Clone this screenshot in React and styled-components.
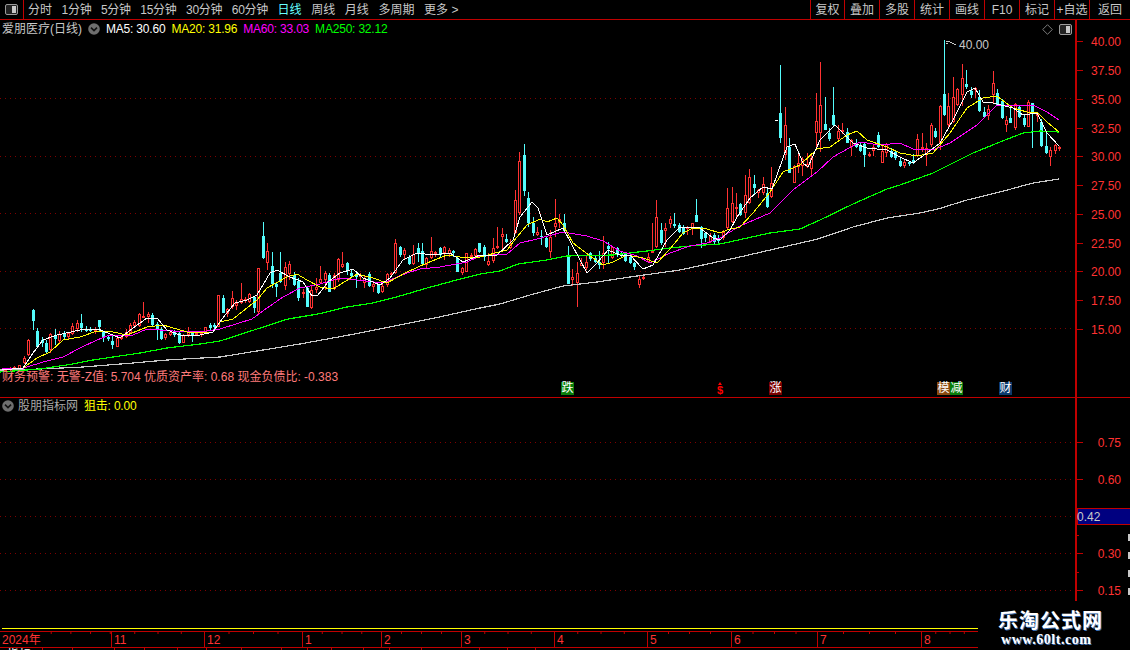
import React from "react";
import styled, { createGlobalStyle } from "styled-components";

const RED = "#c00000";
const AXIS = "#ff3232";
const GREY = "#c8c8c8";
const CN = '"Liberation Sans", "Noto Sans CJK SC", sans-serif';

const Global = createGlobalStyle`
  html, body { margin: 0; padding: 0; background: #000; overflow: hidden; }
  #root { width: 1130px; height: 650px; overflow: hidden; }
`;

const Screen = styled.div`
  width: 1130px; height: 650px; background: #000; overflow: hidden;
  display: flex; flex-direction: column;
  font: 12px/14px ${CN}; color: ${GREY};
`;
const Toolbar = styled.div`
  height: 19px; flex: none; display: flex; align-items: stretch;
  border-bottom: 1px solid ${RED};
`;
const LayoutCell = styled.div`
  width: 23px; flex: none; box-sizing: content-box;
  display: flex; align-items: center; justify-content: center;
  border-right: 1px solid ${RED};
`;
const Tabs = styled.div`display: flex; align-items: center; gap: 9.6px; padding-left: 4px; flex: 1;`;
const Tab = styled.span`
  white-space: nowrap;
  color: ${p => (p.$active ? "#66ffff" : GREY)};
  letter-spacing: ${p => (p.$num ? "-0.3px" : "0")};
`;
const ToolButton = styled.div`
  width: ${p => p.$w || 35}px; box-sizing: border-box; flex: none;
  border-left: 1px solid ${RED};
  display: flex; align-items: center; justify-content: center; white-space: nowrap;
`;
const Pane = styled.div`
  height: ${p => p.$h}px; flex: none; display: flex; position: relative;
  border-bottom: ${p => (p.$line ? `1px solid ${RED}` : "none")};
`;
const Plot = styled.div`width: 1075px; flex: none; position: relative;`;
const ChartSvg = styled.svg`display: block; position: absolute; left: 0; top: 0;`;
const Axis = styled.div`
  flex: 1; position: relative; border-left: 2px solid ${RED};
`;
const Legend = styled.div`
  position: absolute; left: 2px; top: ${p => p.$top}px; display: flex; align-items: center; gap: 6px; white-space: nowrap;
`;
const Name = styled.span`color: ${p => p.$c || GREY}; margin-left: ${p => p.$shift || 0}px;`;
const Value = styled.span`color: ${p => p.$c}; letter-spacing: -0.2px;`;
const Fin = styled.div`
  position: absolute; left: 2px; top: 350px; color: #ff7a7a; white-space: pre;
`;
const Marker = styled.span`
  position: absolute; top: 362px; width: 13px; height: 13px;
  background: ${p => p.$bg}; color: #fff; font-size: 12px; line-height: 13px; text-align: center;
`;
const Dollar = styled.span`
  position: absolute; top: 364px; left: 716px; width: 8px; color: #ff0000;
  font: bold 11px/12px "Liberation Sans", sans-serif; text-align: center;
  &::before {
    content: ""; position: absolute; left: 2px; top: -2px;
    border-left: 2px solid transparent; border-right: 2px solid transparent; border-bottom: 3px solid #ff0000;
  }
`;
const CornerIcons = styled.div`
  position: absolute; right: 3px; top: 4px; display: flex; align-items: center; gap: 6px;
`;
const Bottom = styled.div`flex: 1; display: flex; min-height: 0;`;
const TimeColumn = styled.div`width: 978px; flex: none; display: flex; flex-direction: column;`;
const YellowLine = styled.div`
  margin: 27px 0 2px 2px; height: 1px; flex: none; background: #ffff00;
`;
const Months = styled.div`
  height: 15px; flex: none; display: flex;
  border-top: 1px solid ${RED}; border-bottom: 1px solid ${RED};
`;
const Month = styled.div`
  width: ${p => p.$w}px; flex: none; box-sizing: border-box; position: relative;
  border-left: ${p => (p.$first ? "none" : `1px solid ${RED}`)};
  padding-left: 2px; color: ${AXIS}; line-height: 17px; white-space: nowrap;
  &::after {
    content: ""; position: absolute; top: 0; right: 0; left: ${p => p.$from || 0}px; height: 2px;
    background: linear-gradient(to left, ${RED} 1px, transparent 1px) 0 0 / ${p => p.$tile}px 2px repeat-x;
  }
`;
const Tabs2 = styled.div`flex: 1; display: flex; overflow: hidden; min-height: 0;`;
const SheetTab = styled.div`
  width: ${p => p.$w}px; flex: none; box-sizing: border-box; border-right: 1px solid ${RED};
  color: #fff; padding-left: 7px; line-height: 15px; overflow: hidden; white-space: nowrap;
`;
const Logo = styled.div`
  flex: 1; display: flex; flex-direction: column; padding: 7px 0 0 20px; color: #fff;
  text-shadow: 1px 1px 0 #3d6fb0;
`;
const LogoName = styled.div`
  font: bold 20px/24px "Noto Sans CJK SC", sans-serif; letter-spacing: 1px; white-space: nowrap;
`;
const LogoUrl = styled.div`
  font: bold 14px/15px "Liberation Serif", serif; letter-spacing: 0.55px; padding-left: 3px; white-space: nowrap;
`;

const pts = s => s;
const MA5 = pts("2,370 23,368 33,353 43,340 57,335 80,330 98,329 120,338 133,328 147,318 157,318 167,330 180,335 200,335 213,332 222,319 235,303 247,300 257,295 270,273 277,270 290,277 303,282 312,296 318,295 328,282 340,273 353,269 363,278 380,285 390,278 403,260 417,253 433,255 450,253 463,262 480,255 497,255 513,240 520,217 532,202 538,208 547,235 563,228 587,273 597,263 608,250 620,255 630,255 643,269 653,265 667,240 680,227 700,228 713,238 720,240 730,230 737,217 750,198 763,187 772,189 787,147 795,144 803,163 808,167 820,140 835,125 853,143 867,148 887,150 900,157 913,163 927,153 940,143 953,120 967,92 975,88 983,102 993,103 1013,108 1023,115 1037,113 1047,133 1059,146");
const MA20 = pts("2,370 23,368 37,358 50,352 63,340 80,337 97,331 113,332 127,335 147,327 163,325 187,332 200,333 213,332 220,322 233,319 257,300 267,288 287,277 297,274 307,280 320,287 333,289 357,274 373,278 387,283 407,272 427,263 447,255 467,258 480,257 507,250 517,237 527,225 540,219 547,222 557,218 563,225 573,243 593,258 603,265 613,262 627,255 643,258 657,263 670,249 683,233 693,228 707,229 720,233 727,230 740,227 753,213 770,192 783,172 800,165 817,149 830,147 847,135 857,131 867,140 887,147 900,153 917,156 933,153 950,133 967,108 983,98 997,96 1013,108 1027,112 1037,112 1047,122 1059,132");
const MA60 = pts("2,368 20,369 27,367 43,362 63,357 80,348 97,340 107,336 133,335 147,329 173,331 200,332 220,329 252,319 267,308 283,297 300,288 320,284 340,278 357,280 383,283 397,277 407,273 420,269 440,267 467,262 480,256 507,254 520,243 537,239 563,232 587,236 603,241 620,251 637,256 650,263 670,253 690,246 707,243 720,238 740,226 770,213 793,190 817,172 833,157 860,142 880,145 900,143 913,149 933,150 950,143 977,125 997,105 1017,106 1033,105 1047,112 1059,120");
const MA120 = pts("0,372 40,369 53,367 73,364 93,360 113,357 140,353 167,348 200,344 220,341 288,319 318,314 347,307 373,303 400,296 427,288 453,281 480,274 500,271 518,264 547,260 567,256 613,255 647,251 670,248 690,246 720,244 743,239 770,233 800,229 820,220 853,204 887,189 900,185 933,173 973,153 1000,142 1023,133 1040,131 1059,132");
const MA250 = pts("0,370 40,369 83,367 133,363 167,360 220,357 300,344 360,333 430,319 480,308 500,304 530,295 563,286 597,282 630,277 680,270 740,257 818,239 853,227 887,218 920,213 938,209 967,200 1000,192 1033,183 1059,179");

const blocks = [
  [0, 290, [
    [57,225,225,237,240,0],[73,198,205,220,222,0],[85,148,150,195,198,0],[100,57,60,92,120,1],[112,115,123,172,174,1],[127,140,150,158,170,1],[139,150,158,187,192,1],[151,128,132,180,190,0],[166,118,138,148,165,1],[178,122,132,152,158,0],[193,122,130,142,150,1],[205,125,130,142,150,0],[217,100,107,132,135,0],[232,90,100,118,125,0],[244,72,98,115,125,1],[259,108,118,122,125,1],[271,112,118,122,125,1],[286,112,120,124,132,0],[298,90,90,112,122,1],[310,122,125,140,155,1],[325,135,140,148,152,1],[337,135,152,165,178,1],[352,142,145,170,172,0],[364,138,140,148,150,0],[379,118,125,140,145,0],[391,100,105,128,132,0],[403,90,95,108,112,0],[418,70,72,108,110,0],[430,37,78,80,80,0],[445,65,72,82,100,0],[457,70,75,105,108,1],[472,95,102,120,150,1],[484,110,117,148,150,1],[496,128,132,145,150,0],[511,122,125,135,138,0],[523,120,125,135,140,1],[538,125,130,160,162,1],[550,132,135,158,160,0],[565,112,125,135,140,0],[577,122,128,135,155,1],[589,128,130,135,138,0],[604,126,130,135,140,0],[616,110,112,125,130,0],[631,100,105,115,122,1],[643,100,105,110,120,1],
  ]],
  [200, 210, [
    [55,255,255,351,352,0],[70,255,265,308,310,1],[82,295,297,312,320,0],[97,243,265,290,298,0],[109,270,280,288,300,0],[124,220,268,280,282,0],[136,262,268,272,280,0],[148,250,252,275,278,0],[163,260,262,295,310,1],[175,175,175,305,315,0],[190,37,78,145,148,1],[202,100,123,158,180,0],[217,125,168,223,235,1],[229,215,222,232,262,1],[241,125,190,215,220,1],[256,155,170,228,240,0],[268,152,162,192,210,0],[283,185,195,225,228,1],[295,205,212,265,272,1],[310,238,245,250,265,0],[322,230,235,290,292,1],[334,225,240,295,298,0],[349,205,232,240,248,0],[361,168,207,218,220,0],[376,183,188,210,240,0],[388,188,195,245,247,1],[403,190,195,238,240,0],[415,145,147,210,215,0],[427,125,162,172,175,0],[442,155,158,180,195,1],[454,180,190,198,205,1],[469,190,192,200,235,1],[481,190,195,200,210,0],[493,198,205,220,235,0],[508,185,192,228,230,1],[520,215,222,232,245,0],[535,222,225,250,252,1],[547,222,228,245,248,0],[562,190,193,225,230,0],[574,185,190,194,200,0],[586,88,100,190,192,0],[601,108,112,135,140,1],[613,115,120,135,150,0],[628,135,140,162,165,1],[640,105,132,162,165,0],[655,100,115,132,155,1],[667,98,122,162,165,1],[679,140,145,165,175,0],[694,82,123,145,148,0],[706,122,125,130,140,0],[721,112,115,135,140,1],[733,108,112,130,150,0],[748,115,120,132,140,0],[760,120,123,130,140,1],[772,140,145,185,187,1],[787,170,175,190,195,0],[799,128,130,185,187,0],[814,130,135,142,150,0],[826,115,118,138,145,0],[838,98,100,125,130,1],
  ]],
  [480, 130, [
    [13,345,352,382,392,1],[25,370,393,405,408,0],[40,325,355,392,400,0],[52,292,348,355,358,0],[67,295,312,320,358,0],[79,312,327,337,340,1],[91,328,345,355,358,0],[106,180,210,310,312,0],[118,67,93,250,255,0],[133,42,75,182,198,1],[145,187,205,278,290,1],[160,262,278,310,318,1],[172,292,307,315,318,0],[184,300,318,322,345,1],[199,318,325,352,355,1],[211,300,320,365,385,0],[226,207,280,292,320,0],[238,252,268,280,295,0],[253,252,280,303,305,1],[265,348,375,462,462,1],[277,418,442,450,468,0],[292,395,428,458,530,0],[304,385,400,408,408,0],[319,375,397,415,420,0],[331,365,370,388,392,1],[346,378,385,395,400,1],[358,362,395,405,418,1],[370,318,368,400,418,0],[385,335,348,357,400,1],[397,350,352,385,388,0],[412,352,355,375,380,1],[424,365,370,374,380,1],[436,365,372,392,395,1],[451,375,382,400,402,1],[463,395,400,412,420,1],[478,435,448,465,475,0],[490,435,440,448,450,0],[505,370,380,395,400,0],[517,280,362,368,370,0],[529,210,262,352,355,0],[544,280,300,340,345,1],[556,280,295,302,350,0],[571,258,268,282,295,0],[583,250,282,288,295,1],[598,280,285,305,310,1],
  ]],
  [670, 170, [
    [40,165,172,192,195,1],[52,168,172,178,195,0],[67,158,160,175,195,0],[79,88,135,155,157,1],[94,168,172,208,235,1],[106,185,190,205,215,1],[121,190,198,215,220,0],[133,190,195,215,222,1],[145,195,205,212,218,1],
  ]],
  [720, 50, [
    [10,540,545,565,570,0],[22,415,475,535,540,0],[37,410,460,515,520,0],[49,430,470,475,505,0],[61,460,462,495,498,1],[76,375,435,490,505,0],[88,357,382,460,462,0],[103,375,402,415,432,1],[115,418,420,430,445,0],[130,380,403,430,435,0],[142,410,430,470,475,1],[154,352,400,440,445,0],[181,45,188,265,280,1],[196,170,225,315,330,0],[208,265,290,368,370,1],[223,345,347,398,400,0],[235,312,340,350,370,0],[247,320,328,348,378,0],[262,310,343,352,355,0],[274,310,325,358,375,0],[289,130,213,250,300,0],[301,35,165,250,305,0],[316,140,222,240,240,1],[328,235,250,268,272,1],[340,110,195,225,230,1],[355,225,243,267,270,0],[367,220,240,245,252,0],[382,235,245,278,280,1],[394,268,270,290,318,0],[409,268,280,290,295,1],[421,280,288,303,305,1],[433,280,282,315,350,1],[448,305,312,315,322,0],[460,285,290,302,318,0],[475,245,255,292,295,1],[487,285,303,338,340,0],[499,280,282,308,322,0],[514,295,303,322,325,1],[526,300,305,325,330,1],[541,320,332,347,350,1],
  ]],
  [900, 30, [
    [13,390,395,408,415,0],[28,392,395,403,408,1],[40,372,390,400,402,1],[52,312,328,378,380,0],[67,310,352,358,365,0],[79,340,355,375,408,0],[94,278,285,345,350,0],[106,295,303,322,325,1],[121,225,228,342,360,0],[133,30,192,255,258,1],[145,190,228,285,290,0],[160,140,202,275,280,0],[172,175,178,225,228,0],[187,102,145,195,228,0],[199,120,162,172,178,1],[214,170,183,195,205,1],[226,170,175,180,205,0],[238,180,200,243,245,1],[253,232,245,262,265,1],[265,225,238,258,270,0],[280,122,158,195,222,0],[292,178,188,225,228,1],[307,208,212,265,268,1],[319,258,270,285,305,0],[331,232,265,278,280,1],[346,220,222,295,300,0],[358,225,232,262,265,1],[373,255,265,285,290,1],[385,210,215,290,292,0],[397,218,218,252,355,1],[412,250,252,258,275,0],[424,268,275,348,350,1],[439,305,348,370,372,1],[451,350,360,380,408,0],[466,342,345,362,372,0],[478,347,350,356,362,0],
  ]],
];

const candles = [
  [5, 368, 369, 371, 372, 0], [10, 367, 368, 370, 372, 0], [14, 366, 367, 370, 372, 0],
  ...blocks.flatMap(([ox, oy, rows]) =>
    rows.map(([zx, hi, top, bot, lo, c]) => [
      Math.round(ox + zx / 3), Math.round(oy + hi / 3), Math.round(oy + top / 3),
      Math.round(oy + bot / 3), Math.round(oy + lo / 3), c,
    ])
  ),
];

const CandleRed = "#ff3232";
const CandleCyan = "#54fcfc";

const Candles = () => (
  <g shapeRendering="crispEdges">
    {candles.map(([x, hi, top, bot, lo, c], i) => (
      <g key={i}>
        <rect x={x} y={hi} width={1} height={Math.max(lo - hi, 1)} fill={c ? CandleCyan : CandleRed} />
        {c ? (
          <rect x={x - 1} y={top} width={3} height={Math.max(bot - top, 1)} fill={CandleCyan} />
        ) : (
          <rect x={x - 0.5} y={top + 0.5} width={2} height={Math.max(bot - top - 1, 1)} fill="#000" stroke={CandleRed} strokeWidth={1} />
        )}
      </g>
    ))}
  </g>
);

const Line = ({ d, c, w = 1 }) => <polyline points={d} fill="none" stroke={c} strokeWidth={w} shapeRendering="crispEdges" />;

const Dots = ({ ys }) => (
  <g>
    {ys.map(y => (
      <line key={y} x1={0} x2={1075} y1={y + 0.5} y2={y + 0.5} stroke="#800000" strokeDasharray="1 4" />
    ))}
  </g>
);

const upperTicks = [
  ["40.00", 41], ["37.50", 70], ["35.00", 99], ["32.50", 128], ["30.00", 156],
  ["27.50", 185], ["25.00", 214], ["22.50", 243], ["20.00", 271], ["17.50", 300], ["15.00", 329],
];
const lowerTicks = [["0.75", 441], ["0.60", 478], ["0.30", 552], ["0.15", 589]];

const AxisSvg = ({ ticks, top, h, right, minors = [], children }) => (
  <ChartSvg width={53} height={h} viewBox={`1077 ${top} 53 ${h}`}>
    <g shapeRendering="crispEdges">
      {ticks.map(([t, y]) => (
        <rect key={t} x={1077} y={y} width={6} height={1} fill={RED} />
      ))}
      {minors.map(y => (
        <rect key={y} x={1077} y={y} width={2} height={1} fill={RED} />
      ))}
    </g>
    {ticks.map(([t, y]) => (
      <text key={t} x={right} y={y + 4.5} textAnchor="end" fill={AXIS} fontSize="12" fontFamily="Liberation Sans, sans-serif">{t}</text>
    ))}
    {children}
  </ChartSvg>
);

const PanelIcon = () => (
  <svg width="13" height="11" viewBox="0 0 13 11">
    <rect x="0.5" y="0.5" width="12" height="10" rx="1.5" fill="#222" stroke="#9a9a9a" />
    <rect x="7" y="2" width="4" height="7" fill="#c8c8c8" />
  </svg>
);
const Diamond = () => (
  <svg width="11" height="11" viewBox="0 0 11 11">
    <path d="M5.5 .7 10.3 5.5 5.5 10.3 .7 5.5Z" fill="none" stroke="#7c7c7c" />
  </svg>
);
const Chevron = () => (
  <svg width="12" height="12" viewBox="0 0 12 12" style={{ flex: "none" }}>
    <circle cx="6" cy="6" r="5.8" fill="#6e6e6e" />
    <path d="M3 4.6 6 7.6 9 4.6" fill="none" stroke="#111" strokeWidth="1.6" />
  </svg>
);

const tabs = [
  ["分时"], ["1分钟", 1], ["5分钟", 1], ["15分钟", 1], ["30分钟", 1], ["60分钟", 1],
  ["日线", 0, 1], ["周线"], ["月线"], ["多周期"], ["更多 >"],
];
const buttons = [
  ["复权", 34], ["叠加"], ["多股"], ["统计"], ["画线"], ["F10"], ["标记"], ["+自选"], ["返回", 41],
];
const months = [
  { t: "2024年", w: 111, first: true, from: 32, tile: 19.7 },
  { t: "11", w: 93 }, { t: "12", w: 98 }, { t: "1", w: 79 }, { t: "2", w: 80 },
  { t: "3", w: 93 }, { t: "4", w: 93 }, { t: "5", w: 84 }, { t: "6", w: 86 },
  { t: "7", w: 104 }, { t: "8", w: 57 },
];
const sheets = [
  ["指标", 43], ["", 30], ["K", 42], ["", 30], ["", 33], ["", 29], ["", 35], ["", 40], ["", 26],
  ["", 24], ["", 32], ["", 26], ["", 32], ["", 58], ["", 28], ["", 28],
];

export default function App() {
  return (
    <Screen>
      <Global />
      <Toolbar>
        <LayoutCell><PanelIcon /></LayoutCell>
        <Tabs>
          {tabs.map(([t, num, active]) => (
            <Tab key={t} $num={num} $active={active}>{t}</Tab>
          ))}
        </Tabs>
        {buttons.map(([t, w]) => (
          <ToolButton key={t} $w={w}>{t}</ToolButton>
        ))}
      </Toolbar>

      <Pane $h={377} $line>
        <Plot>
          <ChartSvg width={1075} height={376} viewBox="0 20 1075 376">
            <Dots ys={[98, 156, 213, 271, 328]} />
            <Candles />
            <rect x={775} y={120} width={3} height={1} fill="#fff" shapeRendering="crispEdges" />
            <Line d={MA250} c="#c8c8c8" w={1.2} />
            <Line d={MA120} c="#00ff00" w={1.2} />
            <Line d={MA60} c="#ff00ff" />
            <Line d={MA20} c="#ffff00" />
            <Line d={MA5} c="#ffffff" />
            <path d="M946 41H949M946 43H948M948 41 956 45" fill="none" stroke="#c8c8c8" shapeRendering="crispEdges" />
            <text x={959} y={49} fill="#c8c8c8" fontSize="12" fontFamily="Liberation Sans, sans-serif">40.00</text>
          </ChartSvg>
          <Legend $top={2}>
            <Name>爱朋医疗(日线)</Name>
            <Chevron />
            <Value $c="#ffffff">MA5: 30.60</Value>
            <Value $c="#ffff00">MA20: 31.96</Value>
            <Value $c="#ff00ff">MA60: 33.03</Value>
            <Value $c="#00ff00">MA250: 32.12</Value>
          </Legend>
          <CornerIcons>
            <Diamond />
            <PanelIcon />
          </CornerIcons>
          <Fin>财务预警: 无警-Z值: 5.704 优质资产率: 0.68 现金负债比: -0.383</Fin>
          <Marker $bg="#0a7d0a" style={{ left: 561 }}>跌</Marker>
          <Dollar>$</Dollar>
          <Marker $bg="#7a0000" style={{ left: 769 }}>涨</Marker>
          <Marker $bg="#8a4a10" style={{ left: 937 }}>模</Marker>
          <Marker $bg="#0a7d0a" style={{ left: 950 }}>减</Marker>
          <Marker $bg="#0c3a6c" style={{ left: 999 }}>财</Marker>
        </Plot>
        <Axis>
          <AxisSvg ticks={upperTicks} top={20} h={376} right={1121} />
        </Axis>
      </Pane>

      <Pane $h={203}>
        <Plot>
          <ChartSvg width={1075} height={203} viewBox="0 397 1075 203">
            <Dots ys={[441, 478, 515, 552, 589]} />
          </ChartSvg>
          <Legend $top={1}>
            <Chevron />
            <Name $c="#a8a8a8" $shift={-2}>股朋指标网</Name>
            <Value $c="#ffff00">狙击: 0.00</Value>
          </Legend>
        </Plot>
        <Axis>
          <AxisSvg ticks={lowerTicks} top={397} h={203} right={1121} minors={[534, 571]}>
            <rect x={1077} y={507.5} width={53} height={16} fill="#000080" stroke={RED} shapeRendering="crispEdges" />
            <text x={1077} y={520} fill="#c8c8c8" fontSize="12" fontFamily="Liberation Sans, sans-serif">0.42</text>
            <g fill="#c8c8c8" shapeRendering="crispEdges">
              <rect x={1128} y={533} width={2} height={7} />
              <rect x={1128} y={551} width={2} height={7} />
              <rect x={1128} y={569} width={2} height={7} />
              <rect x={1128} y={587} width={2} height={7} />
            </g>
          </AxisSvg>
        </Axis>
      </Pane>

      <Bottom>
        <TimeColumn>
          <YellowLine />
          <Months>
            {months.map(m => (
              <Month key={m.t} $w={m.w} $first={m.first} $from={m.from} $tile={m.tile || m.w / 4}>{m.t}</Month>
            ))}
          </Months>
          <Tabs2>
            {sheets.map(([t, w], i) => (
              <SheetTab key={i} $w={w}>{t}</SheetTab>
            ))}
          </Tabs2>
        </TimeColumn>
        <Logo>
          <LogoName>乐淘公式网</LogoName>
          <LogoUrl>www.60lt.com</LogoUrl>
        </Logo>
      </Bottom>
    </Screen>
  );
}
